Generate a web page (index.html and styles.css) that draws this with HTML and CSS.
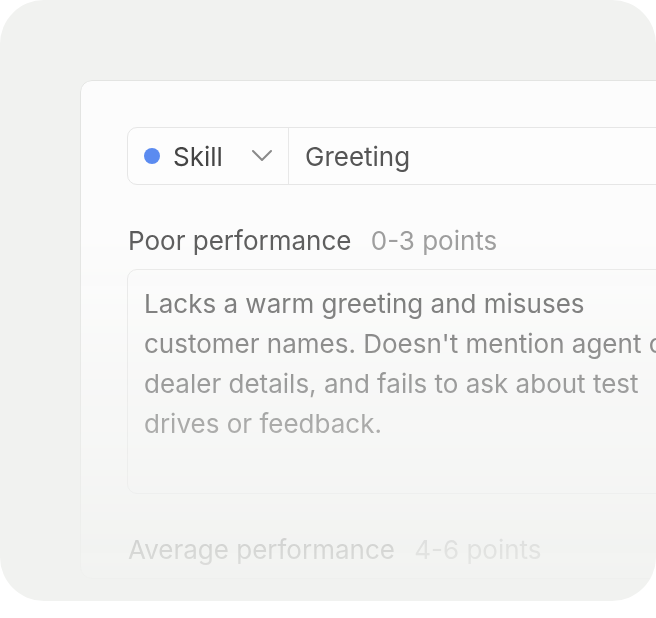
FILE: index.html
```html
<!DOCTYPE html>
<html>
<head>
    <title>Rubric</title>
    <link rel="stylesheet" href="styles.css">
</head>
<body>
    <div class="frame">
        <div class="card">
            <div class="select-row">
                <div class="select-type">
                    <span class="dot"></span>
                    <span class="type-name">Skill</span>
                    <svg class="chevron" width="22" height="14" viewBox="0 0 22 14">
                        <polyline points="2 2 11 11 20 2" fill="none" stroke="#8a8a8a" stroke-width="2" stroke-linecap="round" stroke-linejoin="round"/>
                    </svg>
                </div>
                <div class="select-value">Greeting</div>
            </div>

            <div class="label">
                <span class="label-name">Poor performance</span>
                <span class="label-points">0-3 points</span>
            </div>
            <div class="textbox">
                Lacks a warm greeting and misuses customer names. Doesn't mention agent or dealer details, and fails to ask about test drives or feedback.
            </div>

            <div class="label">
                <span class="label-name">Average performance</span>
                <span class="label-points">4-6 points</span>
            </div>
        </div>
    </div>
</body>
</html>
```

FILE: styles.css
```css
body {
  margin: 0;
  background-color: #ffffff;
  font-family: Inter, "Noto Sans", sans-serif;
}
.frame {
  width: 656px;
  height: 601px;
  border-radius: 44px;
  background-color: #f1f2f0;
  padding: 80px 0 0 80px;
  box-sizing: border-box;
  overflow: hidden;
}
.card {
  width: 660px;
  height: 499px;
  box-sizing: border-box;
  background-color: #fcfcfc;
  border: 1px solid #e3e4e2;
  border-radius: 12px;
  padding: 46px 0 0 46px;
  -webkit-mask-image: linear-gradient(to bottom, #000 0%, #000 28%, rgba(0, 0, 0, 0.1) 100%);
  mask-image: linear-gradient(to bottom, #000 0%, #000 28%, rgba(0, 0, 0, 0.1) 100%);
}
.select-row {
  display: flex;
  height: 58px;
  box-sizing: border-box;
  border: 1px solid #e6e6e6;
  border-radius: 10px;
  background-color: #fdfdfd;
}
.select-type {
  display: flex;
  align-items: center;
  width: 161px;
  padding-left: 16px;
  box-sizing: border-box;
  border-right: 1px solid #e8e8e8;
}
.dot {
  width: 16px;
  height: 16px;
  border-radius: 50%;
  background-color: #5b8bf0;
  margin-right: 13px;
}
.type-name {
  font-size: 26px;
  color: #444;
}
.chevron {
  margin-left: auto;
  margin-right: 15px;
}
.select-value {
  display: flex;
  align-items: center;
  padding-left: 16px;
  font-size: 26px;
  color: #555;
}
.label {
  margin-top: 40px;
  font-size: 26px;
  line-height: 32px;
  padding-left: 1px;
}
.label-name {
  color: #555;
  margin-right: 12px;
}
.label-points {
  color: #999;
}
.textbox {
  margin-top: 12px;
  height: 225px;
  box-sizing: border-box;
  border: 1px solid #e8e8e8;
  border-radius: 10px;
  padding: 14px 16px;
  font-size: 26px;
  line-height: 40px;
  color: #606060;
  width: 580px;
}
.textbox + .label {
  margin-top: 40px;
}
```
